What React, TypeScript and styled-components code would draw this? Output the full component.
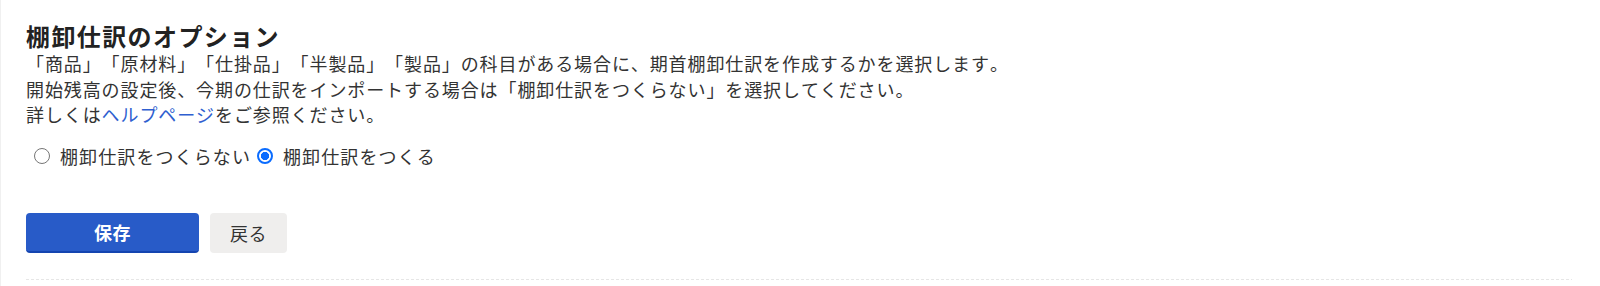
import React, { useState } from "react";
import styled, { createGlobalStyle } from "styled-components";

const Global = createGlobalStyle`
  html, body { margin: 0; padding: 0; background: #ffffff; }
  body {
    font-family: "Noto Sans CJK JP", "Noto Sans", sans-serif;
    color: #333333;
    text-spacing-trim: space-all;
    font-feature-settings: "chws" 0, "halt" 0, "palt" 0;
    font-kerning: none;
  }
`;

const Page = styled.div`
  box-sizing: border-box;
  width: 1600px;
  height: 286px;
  border-left: 1px solid #f0f0f0;
  padding: 20px 28px 0 25px;
`;

const Title = styled.h2`
  margin: 0;
  font-size: 24px;
  line-height: 31px;
  font-weight: 700;
  color: #222222;
  letter-spacing: 1.4px;
  text-spacing-trim: space-all;
`;

const Desc = styled.p`
  margin: 0;
  font-size: 18px;
  line-height: 25.5px;
  letter-spacing: 0.9px;
  color: #333333;
  text-spacing-trim: space-all;
`;

const Link = styled.a`
  color: #2f5fd0;
  text-decoration: none;
`;

const RadioRow = styled.div`
  display: flex;
  align-items: center;
  margin-top: 15px;
  padding-left: 8px;
  height: 26px;
`;

const RadioLabel = styled.label`
  display: flex;
  align-items: center;
  font-size: 18px;
  letter-spacing: 1.1px;
  color: #333333;
  margin-right: 6px;
  cursor: pointer;
`;

const Radio = styled.input`
  appearance: none;
  box-sizing: border-box;
  width: 16px;
  height: 16px;
  margin: 0 10px 0 0;
  border-radius: 50%;
  border: 1.5px solid #767676;
  background: #ffffff;
  &:checked {
    border: 2px solid #0a6cff;
    background: radial-gradient(circle, #0a6cff 0 3.8px, #ffffff 4.4px);
  }
`;

const Actions = styled.div`
  display: flex;
  gap: 11px;
  margin-top: 44px;
`;

const Button = styled.button<{ $primary?: boolean }>`
  box-sizing: border-box;
  height: 40px;
  width: ${(p) => (p.$primary ? "173px" : "77px")};
  border-radius: 4px;
  border: none;
  font-family: "Noto Sans CJK JP", sans-serif;
  font-size: 18px;
  letter-spacing: 0.6px;
  font-weight: ${(p) => (p.$primary ? 700 : 400)};
  color: ${(p) => (p.$primary ? "#ffffff" : "#333333")};
  background: ${(p) => (p.$primary ? "#285bc8" : "#efeeed")};
  border-bottom: ${(p) => (p.$primary ? "2px solid #1444b0" : "none")};
  cursor: pointer;
`;

const Divider = styled.div`
  margin-top: 26px;
  height: 1px;
  width: 1546px;
  background: repeating-linear-gradient(
    to right,
    #e6e6e6 0 3px,
    transparent 3px 5px
  );
`;

export default function App() {
  const [val, setVal] = useState("make");
  return (
    <>
      <Global />
      <Page>
        <Title>棚卸仕訳のオプション</Title>
        <Desc>
          「商品」「原材料」「仕掛品」「半製品」「製品」の科目がある場合に、期首棚卸仕訳を作成するかを選択します。
        </Desc>
        <Desc>
          開始残高の設定後、今期の仕訳をインポートする場合は「棚卸仕訳をつくらない」を選択してください。
        </Desc>
        <Desc>
          詳しくは<Link href="#">ヘルプページ</Link>をご参照ください。
        </Desc>
        <RadioRow>
          <RadioLabel>
            <Radio
              type="radio"
              name="opt"
              checked={val === "none"}
              onChange={() => setVal("none")}
            />
            棚卸仕訳をつくらない
          </RadioLabel>
          <RadioLabel>
            <Radio
              type="radio"
              name="opt"
              checked={val === "make"}
              onChange={() => setVal("make")}
            />
            棚卸仕訳をつくる
          </RadioLabel>
        </RadioRow>
        <Actions>
          <Button $primary>保存</Button>
          <Button>戻る</Button>
        </Actions>
        <Divider />
      </Page>
    </>
  );
}
